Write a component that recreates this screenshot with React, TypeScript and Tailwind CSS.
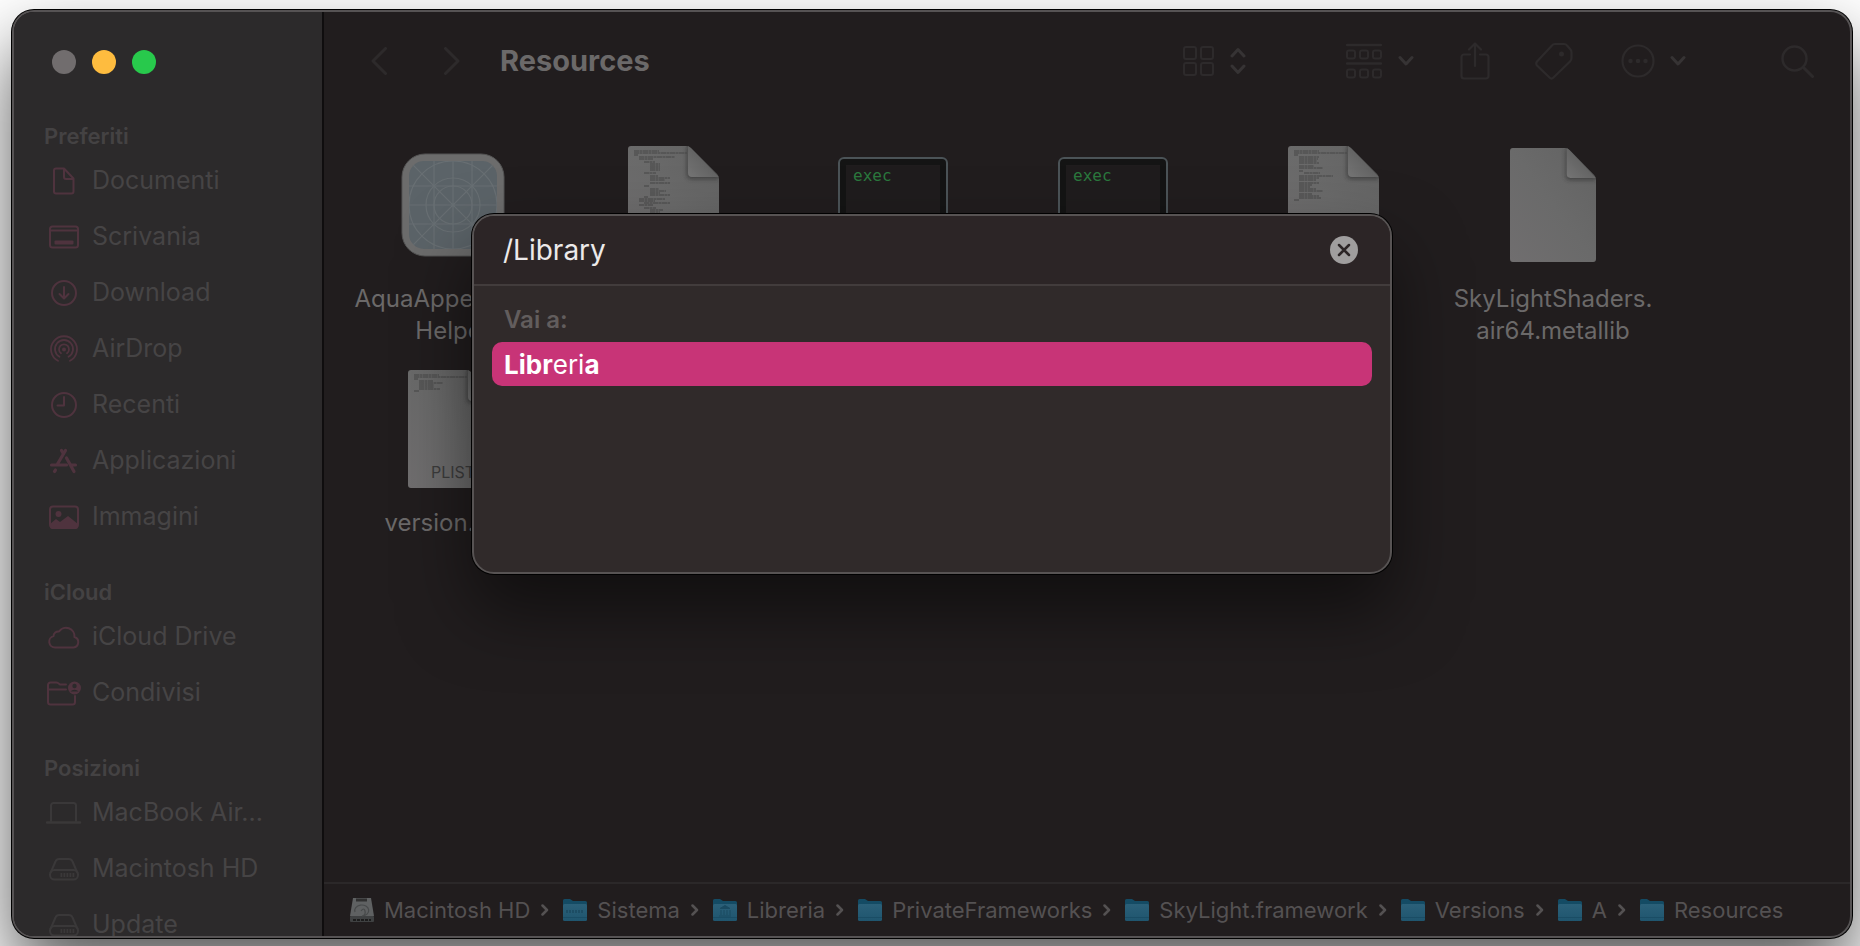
import { useState } from 'react';
import type { ReactNode } from 'react';

type IconProps = { className?: string };

const DocIcon = () => (
  <svg width="36" height="32" viewBox="0 0 36 32" fill="none" stroke="currentColor" strokeWidth="2" strokeLinejoin="round">
    <path d="M10 3.500h8l9.500 10v13a2 2 0 0 1-2 2H10a2 2 0 0 1-2-2v-21a2 2 0 0 1 2-2z" />
    <path d="M18 3.500v8.500a2 2 0 0 0 2 2h7.500" />
  </svg>
);

const DesktopIcon = () => (
  <svg width="36" height="32" viewBox="0 0 36 32" fill="none" stroke="currentColor" strokeWidth="2">
    <rect x="4" y="5.500" width="28" height="21" rx="2.500" />
    <path d="M4 9.500h28" />
    <rect x="8.500" y="19.500" width="19" height="4" rx="1" fill="currentColor" stroke="none" />
  </svg>
);

const DownloadIcon = () => (
  <svg width="36" height="32" viewBox="0 0 36 32" fill="none" stroke="currentColor" strokeWidth="2" strokeLinecap="round" strokeLinejoin="round">
    <circle cx="18" cy="16" r="12" />
    <path d="M18 10v11M13.500 17l4.500 4.500 4.500-4.500" />
  </svg>
);

const AirDropIcon = () => (
  <svg width="36" height="32" viewBox="0 0 36 32" fill="none" stroke="currentColor" strokeWidth="1.800" strokeLinecap="round">
    <circle cx="18" cy="16.500" r="2" fill="currentColor" stroke="none" />
    <path d="M15 20.300a5 5 0 1 1 6 0" />
    <path d="M13.500 23.800a9 9 0 1 1 9 0" />
    <path d="M12 27.800a13 13 0 1 1 12 0" />
  </svg>
);

const RecentIcon = () => (
  <svg width="36" height="32" viewBox="0 0 36 32" fill="none" stroke="currentColor" strokeWidth="2" strokeLinecap="round" strokeLinejoin="round">
    <circle cx="18" cy="16" r="12" />
    <path d="M18 8v8.500h-6.500" />
  </svg>
);

const AppsIcon = () => (
  <svg width="36" height="32" viewBox="0 0 36 32" fill="none" stroke="currentColor" strokeWidth="3.200" strokeLinecap="round">
    <path d="M19.500 5.500L11.500 19M15.500 5.500l2 3.500M20.500 13l7.500 13.500M5.500 20h15M25.500 20h4M9.500 25l-1 1.500" />
  </svg>
);

const ImagesIcon = () => (
  <svg width="36" height="32" viewBox="0 0 36 32">
    <rect x="4" y="5.500" width="28" height="21" rx="3" fill="none" stroke="currentColor" strokeWidth="2" />
    <circle cx="12.500" cy="13" r="3" fill="currentColor" />
    <path d="M4 23l6-5 4 3 8-6 10 8v3a2 2 0 0 1-2 2H6a2 2 0 0 1-2-2z" fill="currentColor" />
  </svg>
);

const CloudIcon = () => (
  <svg width="36" height="32" viewBox="0 0 36 32" fill="none" stroke="currentColor" strokeWidth="2" strokeLinejoin="round">
    <path d="M9 26.500a5.800 5.800 0 0 1-1.500-11.400 4.800 4.800 0 0 1 5.500-4.600 8.500 8.500 0 0 1 15.500 5.500 5.400 5.400 0 0 1-1 10.500z" />
  </svg>
);

const SharedIcon = () => (
  <svg width="36" height="32" viewBox="0 0 36 32" fill="none" stroke="currentColor" strokeWidth="2" strokeLinecap="round">
    <path d="M20 7.500h-6l-2-1.500a3 3 0 0 0-2-.5H4.500A2.500 2.500 0 0 0 2 8v17a2.500 2.500 0 0 0 2.500 2.500h22A2.500 2.500 0 0 0 29 25v-6M2 12.500h18" />
    <circle cx="28.500" cy="11" r="6.500" fill="currentColor" stroke="none" />
    <circle cx="28.500" cy="9" r="2.200" fill="#2c2a2b" stroke="none" />
    <path d="M24.500 14.500a4.500 3 0 0 1 8 0z" fill="#2c2a2b" stroke="none" />
  </svg>
);

const LaptopIcon = () => (
  <svg width="36" height="32" viewBox="0 0 36 32" fill="none" stroke="currentColor" strokeWidth="2" strokeLinecap="round">
    <path d="M5 24V8.500A2.500 2.500 0 0 1 7.500 6h20A2.500 2.500 0 0 1 30 8.500V24" />
    <path d="M1 25.500h33" strokeWidth="2.500" />
  </svg>
);

const DriveIcon = () => (
  <svg width="36" height="32" viewBox="0 0 36 32" fill="none" stroke="currentColor" strokeWidth="2">
    <path d="M4.500 20L9.500 8.500a4 4 0 0 1 4-2.500h9a4 4 0 0 1 4 2.500l5 11.500" />
    <rect x="4" y="17" width="28" height="9.500" rx="4.500" />
    <path d="M14.500 22h14" strokeWidth="4" strokeDasharray="1.800 1.200" />
  </svg>
);

const Chevron = ({ className }: IconProps) => (
  <svg className={className} width="16" height="12" viewBox="0 0 16 12" fill="none" stroke="#363334" strokeWidth="3" strokeLinecap="round" strokeLinejoin="round">
    <path d="M2 2.500l6 6.500 6-6.500" />
  </svg>
);

const Fold = ({ id }: { id: string }) => (
  <>
    <defs>
      <linearGradient id={`${id}-paper`} x1="0" y1="1" x2="1" y2="0">
        <stop offset="0" stopColor="#706e6f" />
        <stop offset="0.500" stopColor="#6a6a6a" />
        <stop offset="1" stopColor="#626262" />
      </linearGradient>
      <linearGradient id={`${id}-fold`} x1="0" y1="1" x2="0.600" y2="0.400">
        <stop offset="0" stopColor="#757575" />
        <stop offset="1" stopColor="#606060" />
      </linearGradient>
      <filter id={`${id}-blur`} x="-30%" y="-30%" width="160%" height="160%">
        <feGaussianBlur stdDeviation="2" />
      </filter>
      <clipPath id={`${id}-clip`}>
        <path d="M3 0h55q3 0 5 2l26 26q2 2 2 5v82q0 3-3 3H3q-3 0-3-3V3q0-3 3-3z" />
      </clipPath>
    </defs>
    <g clipPath={`url(#${id}-clip)`}>
      <rect width="91" height="118" fill={`url(#${id}-paper)`} />
      <path d="M59 0v29q0 4 4 4h28v-4L62 0z" fill="#2c2c2c" opacity="0.600" filter={`url(#${id}-blur)`} />
      <path d="M60 0v27q0 4 4 4h27L61 0z" fill={`url(#${id}-fold)`} />
    </g>
  </>
);

// [x, y, width] of each line of source on the page thumbnails
const nestedLines: [number, number, number][] = [
  [6, 5, 25], [6, 7, 53], [6, 9, 4], [11, 11, 36], [11, 13, 14], [16, 16, 11], [22, 18, 10], [22, 20, 10], [22, 22, 10],
  [22, 24, 10], [16, 27, 12], [22, 30, 8], [22, 32, 20], [22, 34, 15], [22, 37, 20], [16, 40, 5], [22, 43, 9], [22, 45, 16],
  [22, 47, 10], [22, 49, 20], [16, 51, 4], [11, 53, 26], [11, 55, 16], [16, 57, 26], [11, 59, 14], [16, 62, 12], [22, 64, 13],
  [22, 66, 10],
];
const flatLines: [number, number, number][] = [
  [6, 5, 25], [6, 7, 53], [6, 9, 4], [11, 11, 20], [11, 13, 19], [11, 15, 18], [11, 17, 20], [11, 20, 15], [11, 22, 24],
  [11, 25, 4], [16, 27, 16], [11, 30, 34], [11, 32, 20], [11, 34, 17], [11, 37, 20], [11, 39, 13], [11, 41, 11], [11, 43, 17],
  [11, 45, 24], [11, 48, 13], [11, 50, 20], [11, 52, 22], [6, 54, 5],
];
const shortLines: [number, number, number][] = [
  [6, 5, 25], [6, 7, 53], [6, 9, 4], [11, 11, 14], [11, 13, 24], [11, 15, 15], [11, 17, 15], [11, 19, 21], [6, 21, 5],
];

const CodeDocument = ({ id, lines, kind }: { id: string; lines: [number, number, number][]; kind?: string }) => (
  <div className="relative">
    <svg width="91" height="118" viewBox="0 0 91 118">
      <Fold id={id} />
      {lines.map(([x, y, w]) => (
        <path key={y} d={`M${x} ${y}h${w}`} stroke="#464646" strokeWidth="1" strokeDasharray="5 0.500 3 0.500" />
      ))}
    </svg>
    {kind && <span className="absolute inset-x-0 bottom-1 text-center text-base text-[#3c3c3c]">{kind}</span>}
  </div>
);

const PlainDocument = () => (
  <svg width="86" height="114" viewBox="0 0 91 118" preserveAspectRatio="none">
    <Fold id="metallib" />
  </svg>
);

const ExecIcon = () => (
  <div className="h-24 w-[110px] rounded-md border-2 border-[#4b5357] bg-[#141414] p-[6px]">
    <div className="h-full bg-[#1f1c1d] pl-[7px] font-['DejaVu_Sans_Mono',monospace] text-base leading-[22px] text-[#2b783d]">exec</div>
  </div>
);

const AppIcon = () => (
  <svg width="104" height="104" viewBox="0 0 104 104">
    <defs>
      <clipPath id="app-grid">
        <rect x="8" y="8" width="88" height="88" rx="15" />
      </clipPath>
    </defs>
    <rect x="1" y="1" width="102" height="102" rx="23" fill="#6c6c6c" stroke="#555" />
    <g clipPath="url(#app-grid)">
      <rect x="8" y="8" width="88" height="88" fill="#5b6368" />
      <g fill="none" stroke="#686f73" strokeWidth="1.200">
        <path d="M33 8v88M52 8v88M71 8v88M8 33h88M8 52h88M8 71h88M8 8l88 88M96 8L8 96" />
        <circle cx="52" cy="52" r="44" />
        <circle cx="52" cy="52" r="27" />
        <circle cx="52" cy="52" r="19" />
      </g>
    </g>
  </svg>
);

const FolderIcon = ({ mark }: { mark?: string }) => (
  <svg width="24" height="26" viewBox="0 0 24 26" className="shrink-0">
    <defs>
      <linearGradient id="folder-front" x1="0" y1="0" x2="0" y2="1">
        <stop offset="0" stopColor="#2b6079" />
        <stop offset="1" stopColor="#1f556e" />
      </linearGradient>
    </defs>
    <path d="M0 3.500Q0 2 1.500 2H7l3 2h12.500Q24 4 24 5.500V10H0z" fill="#144b64" />
    <rect y="7" width="24" height="17" rx="1.500" fill="url(#folder-front)" />
    <path d="M0 20.500h24" stroke="#1a4d65" />
    {mark === 'system' && <path d="M3 14.500h18" stroke="#1d4d64" strokeWidth="3" strokeDasharray="2 1" />}
    {mark === 'library' && <path d="M7 11.500l5-3 5 3zM8 13v5M11 13v5M14 13v5M17 13v5M6 19h12" stroke="#1a4a61" fill="#1a4a61" />}
  </svg>
);

const DiskIcon = () => (
  <svg width="24" height="26" viewBox="0 0 24 26" className="shrink-0">
    <path d="M3 1h18l3 18H0z" fill="#5f6162" />
    <rect x="0" y="19" width="24" height="6" rx="1" fill="#3f4142" />
    <path d="M6 3h11" stroke="#303030" strokeWidth="3" />
    <path d="M5 15a7 5.500 0 1 1 7 4q4-1 3-5t-4 0" fill="none" stroke="#484a4b" strokeWidth="1.200" />
    <path d="M3 23h18" stroke="#1c1c1c" strokeWidth="2" strokeDasharray="3 1" />
  </svg>
);

const sections = [
  {
    title: 'Preferiti',
    color: 'text-[#4f333e]',
    items: [
      { name: 'Documenti', icon: <DocIcon /> },
      { name: 'Scrivania', icon: <DesktopIcon /> },
      { name: 'Download', icon: <DownloadIcon /> },
      { name: 'AirDrop', icon: <AirDropIcon /> },
      { name: 'Recenti', icon: <RecentIcon /> },
      { name: 'Applicazioni', icon: <AppsIcon /> },
      { name: 'Immagini', icon: <ImagesIcon /> },
    ],
  },
  {
    title: 'iCloud',
    color: 'text-[#4f333e]',
    items: [
      { name: 'iCloud Drive', icon: <CloudIcon /> },
      { name: 'Condivisi', icon: <SharedIcon /> },
    ],
  },
  {
    title: 'Posizioni',
    color: 'text-[#3a3839]',
    items: [
      { name: 'MacBook Air...', icon: <LaptopIcon /> },
      { name: 'Macintosh HD', icon: <DriveIcon /> },
      { name: 'Update', icon: <DriveIcon /> },
    ],
  },
];

const files: { label: string[]; icon: ReactNode }[] = [
  { label: ['AquaAppearance', 'Helper'], icon: <AppIcon /> },
  { label: [], icon: <CodeDocument id="nested" lines={nestedLines} /> },
  { label: [], icon: <ExecIcon /> },
  { label: [], icon: <ExecIcon /> },
  { label: [], icon: <CodeDocument id="flat" lines={flatLines} /> },
  { label: ['SkyLightShaders.', 'air64.metallib'], icon: <PlainDocument /> },
  { label: ['version.plist'], icon: <CodeDocument id="plist" lines={shortLines} kind="PLIST" /> },
];

const path = [
  { name: 'Macintosh HD', icon: <DiskIcon /> },
  { name: 'Sistema', icon: <FolderIcon mark="system" /> },
  { name: 'Libreria', icon: <FolderIcon mark="library" /> },
  { name: 'PrivateFrameworks', icon: <FolderIcon /> },
  { name: 'SkyLight.framework', icon: <FolderIcon /> },
  { name: 'Versions', icon: <FolderIcon /> },
  { name: 'A', icon: <FolderIcon /> },
  { name: 'Resources', icon: <FolderIcon /> },
];

const Sidebar = () => (
  <aside className="w-[310px] shrink-0 overflow-hidden border-r-2 border-[#0f0d0e] bg-[#2c2a2b]">
    <div className="flex gap-4 pt-[38px] pl-[38px]">
      <button aria-label="Chiudi" className="size-6 rounded-full bg-[#716d6e]" />
      <button aria-label="Riduci" className="size-6 rounded-full bg-[#febc3f]" />
      <button aria-label="Ingrandisci" className="size-6 rounded-full bg-[#28c94c]" />
    </div>
    <nav className="mt-[45px] flex flex-col gap-[30px]">
      {sections.map((section) => (
        <section key={section.title}>
          <h2 className="pl-[30px] text-[22px] leading-[34px] font-semibold text-[#444243]">{section.title}</h2>
          <ul>
            {section.items.map((item) => (
              <li key={item.name}>
                <a href="#" className="flex h-14 items-center gap-[10px] pl-8 text-[25px] text-[#464445]">
                  <span className={section.color}>{item.icon}</span>
                  {item.name}
                </a>
              </li>
            ))}
          </ul>
        </section>
      ))}
    </nav>
  </aside>
);

const Toolbar = () => (
  <header className="flex h-[98px] shrink-0 items-center pr-9 pl-[47px] text-[#2d2a2b]">
    <button aria-label="Indietro">
      <svg width="16" height="28" viewBox="0 0 16 28" fill="none" stroke="currentColor" strokeWidth="3" strokeLinecap="round" strokeLinejoin="round">
        <path d="M14.500 1.500L2 14l12.500 12.500" />
      </svg>
    </button>
    <button aria-label="Avanti" className="ml-[57px]">
      <svg width="16" height="28" viewBox="0 0 16 28" fill="none" stroke="currentColor" strokeWidth="3" strokeLinecap="round" strokeLinejoin="round">
        <path d="M1.500 1.500L14 14 1.500 26.500" />
      </svg>
    </button>
    <h1 className="ml-10 text-[29px] font-bold text-[#6b6969]">Resources</h1>

    <button aria-label="Vista" className="ml-auto flex items-center gap-4">
      <svg width="31" height="32" viewBox="0 0 31 32" fill="none" stroke="currentColor" strokeWidth="2">
        <rect x="1" y="2" width="12" height="12" rx="2" />
        <rect x="18" y="2" width="12" height="12" rx="2" />
        <rect x="1" y="18" width="12" height="12" rx="2" />
        <rect x="18" y="18" width="12" height="12" rx="2" />
      </svg>
      <svg width="16" height="28" viewBox="0 0 16 28" fill="none" stroke="#363334" strokeWidth="3" strokeLinecap="round" strokeLinejoin="round">
        <path d="M2 9l6-6.500L14 9M2 19l6 6.500 6-6.500" />
      </svg>
    </button>
    <button aria-label="Raggruppa" className="ml-[100px] flex items-center gap-4">
      <svg width="36" height="36" viewBox="0 0 36 36" fill="none" stroke="currentColor" strokeWidth="2">
        <path d="M1 2h34M1 20.500h34" strokeWidth="2.500" strokeLinecap="round" />
        <rect x="1" y="7.500" width="8" height="8" rx="2" />
        <rect x="14" y="7.500" width="8" height="8" rx="2" />
        <rect x="27" y="7.500" width="8" height="8" rx="2" />
        <rect x="1" y="26.500" width="8" height="8" rx="2" />
        <rect x="14" y="26.500" width="8" height="8" rx="2" />
        <rect x="27" y="26.500" width="8" height="8" rx="2" />
      </svg>
      <Chevron />
    </button>
    <button aria-label="Condividi" className="ml-[46px]">
      <svg width="30" height="38" viewBox="0 0 30 38" fill="none" stroke="currentColor" strokeWidth="2.200" strokeLinecap="round" strokeLinejoin="round">
        <path d="M10 12.500H4A2.500 2.500 0 0 0 1.500 15v19A2.500 2.500 0 0 0 4 36.500h22a2.500 2.500 0 0 0 2.500-2.500V15a2.500 2.500 0 0 0-2.500-2.500h-6M15 24V1.500M9 7.500l6-6 6 6" />
      </svg>
    </button>
    <button aria-label="Tag" className="ml-[45px]">
      <svg width="38" height="38" viewBox="0 0 38 38" fill="none" stroke="currentColor" strokeWidth="2.200" strokeLinejoin="round">
        <path d="M20 2h9q2 0 3 1.500l3.500 4q1 1 1 3V16q0 2-1.500 3.500L18.500 35.500q-2 2-4 0L2 23.500q-1.500-2 0-4L17 3.500Q18 2 20 2z" />
        <circle cx="26.500" cy="12" r="2.500" fill="currentColor" stroke="none" />
      </svg>
    </button>
    <button aria-label="Altro" className="ml-12 flex items-center gap-[15px]">
      <svg width="34" height="34" viewBox="0 0 34 34" fill="none" stroke="currentColor" strokeWidth="2.200">
        <circle cx="17" cy="17" r="15.500" />
        <path d="M9.500 17h.01M17 17h.01M24.500 17h.01" strokeWidth="4.500" strokeLinecap="round" />
      </svg>
      <Chevron />
    </button>
    <button aria-label="Cerca" className="ml-[95px]">
      <svg width="33" height="33" viewBox="0 0 33 33" fill="none" stroke="currentColor" strokeWidth="2.500" strokeLinecap="round">
        <circle cx="13.500" cy="13.500" r="12" />
        <path d="M22.500 22.500l9 9" strokeWidth="3" />
      </svg>
    </button>
  </header>
);

const PathBar = () => (
  <nav aria-label="Percorso" className="h-[54px] shrink-0 border-t-2 border-[#2b2829] pl-[26px]">
    <ol className="flex h-full items-center text-[22px] text-[#545152]">
      {path.map((part, i) => (
        <li key={part.name} className="flex items-center">
          {i > 0 && (
            <svg width="8" height="12" viewBox="0 0 8 12" fill="none" stroke="currentColor" strokeWidth="2.500" strokeLinecap="round" strokeLinejoin="round" className="mr-[14px] ml-[11px] shrink-0">
              <path d="M1.500 1.500L6 6l-4.500 4.500" />
            </svg>
          )}
          <a href="#" className="flex items-center gap-[10px] whitespace-nowrap">
            {part.icon}
            {part.name}
          </a>
        </li>
      ))}
    </ol>
  </nav>
);

const GoToSheet = () => {
  const [value, setValue] = useState('/Library');

  return (
    <div
      role="dialog"
      aria-label="Vai alla cartella"
      className="absolute top-[202px] left-1/2 w-[calc(50%+2px)] -translate-x-1/2 overflow-hidden rounded-[22px] border-2 border-[#575353] bg-[#302a2a] shadow-[0_0_0_1px_#000,0_36px_70px_rgba(0,0,0,0.5)]"
    >
      <div className="flex h-[70px] items-center border-b-2 border-[#423c3c] bg-[#2c2526] pr-8 pl-[29px]">
        <input
          aria-label="Percorso cartella"
          value={value}
          onChange={(e) => setValue(e.target.value)}
          className="min-w-0 flex-1 bg-transparent text-[28px] text-[#eceaea] outline-none"
        />
        <button aria-label="Cancella" onClick={() => setValue('')}>
          <svg width="28" height="28" viewBox="0 0 28 28">
            <circle cx="14" cy="14" r="14" fill="#a09e9e" />
            <path d="M9 9l10 10M19 9L9 19" stroke="#2c2526" strokeWidth="2.500" strokeLinecap="round" />
          </svg>
        </button>
      </div>
      <div className="min-h-[286px] px-[18px] pt-5">
        <h2 className="mb-2 px-3 text-[24px] leading-7 font-semibold text-[#625d5d]">Vai a:</h2>
        <button className="block h-11 w-full rounded-[10px] bg-[#c83477] px-3 text-left text-[26px] text-white">
          <b>Libr</b>eri<b>a</b>
        </button>
      </div>
    </div>
  );
};

const App = () => (
  <div className="h-screen overflow-hidden bg-white pt-[10px] pr-2 pb-2 pl-3 font-['Inter','Liberation_Sans',sans-serif]">
    <div className="relative flex h-full overflow-hidden rounded-[22px] border-2 border-[#565354] bg-[#211d1e] shadow-[0_0_0_1px_#000,0_36px_72px_rgba(0,0,0,0.66)]">
      <Sidebar />
      <main className="flex min-w-0 flex-1 flex-col">
        <Toolbar />
        <ul className="grid flex-1 grid-cols-[repeat(auto-fill,220px)] content-start pt-[31px] pl-[19px]">
          {files.map((file, i) => (
            <li key={i} className="flex h-[224px] flex-col items-center">
              <div className="flex h-32 items-center">{file.icon}</div>
              <p className="mt-[14px] text-center text-[24px] leading-8 text-[#6b6969]">
                {file.label.map((line) => (
                  <span key={line} className="block">{line}</span>
                ))}
              </p>
            </li>
          ))}
        </ul>
        <PathBar />
      </main>
      <GoToSheet />
    </div>
  </div>
);

export default App;
